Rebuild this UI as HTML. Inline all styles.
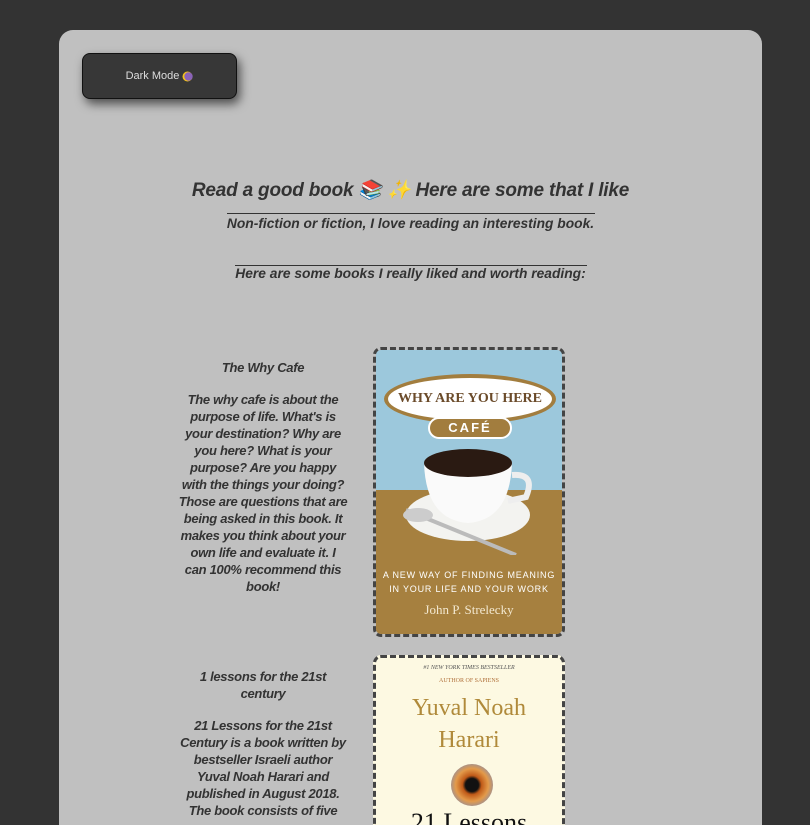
<!DOCTYPE html>
<html><head><meta charset="utf-8"><style>
*{margin:0;padding:0;box-sizing:border-box}
html,body{width:810px;height:825px;overflow:hidden;background:#333}
.wrap{position:absolute;left:59px;top:30px;width:703px;height:795px;background:#c0c0c0;border-radius:14px 14px 0 0;overflow:hidden}
.btn{position:absolute;left:23px;top:23px;width:155px;height:46px;background:#373737;border:1px solid #111;border-radius:8px;box-shadow:3px 5px 10px rgba(0,0,0,.6);color:#ddd;font:11px "Liberation Sans",sans-serif;display:flex;align-items:center;justify-content:center}
.t{position:absolute;left:0;width:703px;text-align:center;font-family:"Liberation Sans",sans-serif;font-style:italic;font-weight:bold;color:#333;white-space:nowrap}
.hr{position:absolute;height:1px;background:#333}
.desc{position:absolute;left:99px;width:210px;text-align:center;font:italic bold 13px/17px "Liberation Sans",sans-serif;color:#333;white-space:nowrap;letter-spacing:-.3px}
.img{position:absolute;left:314px;width:192px;border:3px dashed #444;border-radius:8px;overflow:hidden}
</style></head><body>
<div class="wrap">
<div class="btn">Dark Mode&nbsp;<svg width="11" height="11" viewBox="0 0 11 11"><circle cx="5.5" cy="5.5" r="5" fill="#f2c21b"/><circle cx="6.5" cy="5.5" r="4.2" fill="#8a63b8"/></svg></div>
<div class="t" style="top:148px;font-size:19px;letter-spacing:-.2px">Read a good book 📚 ✨ Here are some that I like</div>
<div class="hr" style="left:168px;width:368px;top:183px"></div>
<div class="t" style="top:186px;font-size:13.8px">Non-fiction or fiction, I love reading an interesting book.</div>
<div class="hr" style="left:176px;width:352px;top:235px"></div>
<div class="t" style="top:236px;font-size:13.8px">Here are some books I really liked and worth reading:</div>

<div class="desc" style="top:329px">The Why Cafe</div>
<div class="desc" style="top:361px">The why cafe is about the<br>purpose of life. What's is<br>your destination? Why are<br>you here? What is your<br>purpose? Are you happy<br>with the things your doing?<br>Those are questions that are<br>being asked in this book. It<br>makes you think about your<br>own life and evaluate it. I<br>can 100% recommend this<br>book!</div>
<div class="img" style="top:317px;height:290px">
 <div style="position:absolute;left:0;top:0;width:100%;height:140px;background:#9cc8dc"></div>
 <div style="position:absolute;left:0;top:140px;width:100%;height:150px;background:#a6803f"></div>
 <div style="position:absolute;left:8px;top:24px;width:172px;height:50px;border-radius:50%;background:#fff;border:4px solid #a27d3e;text-align:center;font:bold 14px/42px 'Liberation Serif',serif;color:#6b4b2a;white-space:nowrap">WHY ARE YOU HERE</div>
 <div style="position:absolute;left:52px;top:67px;width:84px;height:22px;border-radius:11px;background:#a27d3e;border:2px solid #fff;color:#fff;text-align:center;font:bold 13px/18px 'Liberation Sans',sans-serif;letter-spacing:2px">CAFÉ</div>
 <svg style="position:absolute;left:20px;top:95px" width="150" height="110"><ellipse cx="72" cy="70" rx="62" ry="26" fill="#f3f3f0"/><path d="M28 18 Q30 75 72 78 Q114 75 116 18 Z" fill="#fafafa"/><ellipse cx="72" cy="18" rx="44" ry="14" fill="#2a1a12"/><path d="M116 30 Q140 28 130 52 L112 56" fill="none" stroke="#eee" stroke-width="6"/><path d="M10 65 L120 110" stroke="#bbb" stroke-width="4"/><ellipse cx="22" cy="70" rx="15" ry="7" fill="#ccc"/></svg>
 <div style="position:absolute;left:0;top:218px;width:100%;text-align:center;font:9px/14px 'Liberation Sans',sans-serif;color:#fff;letter-spacing:.8px">A NEW WAY OF FINDING MEANING<br>IN YOUR LIFE AND YOUR WORK</div>
 <div style="position:absolute;left:0;top:252px;width:100%;text-align:center;font:13px 'Liberation Serif',serif;color:#f3e8d0">John P. Strelecky</div>
</div>

<div class="desc" style="top:638px">1 lessons for the 21st<br>century</div>
<div class="desc" style="top:687px">21 Lessons for the 21st<br>Century is a book written by<br>bestseller Israeli author<br>Yuval Noah Harari and<br>published in August 2018.<br>The book consists of five</div>
<div class="img" style="top:625px;height:170px;border-bottom:none;border-radius:8px 8px 0 0;background:#fdf9e2">
 <div style="position:absolute;left:0;top:7px;width:100%;text-align:center;font:italic 6px 'Liberation Serif',serif;color:#555">#1 NEW YORK TIMES BESTSELLER</div>
 <div style="position:absolute;left:0;top:20px;width:100%;text-align:center;font:6px 'Liberation Serif',serif;color:#b0703a">AUTHOR OF SAPIENS</div>
 <div style="position:absolute;left:0;top:34px;width:100%;text-align:center;font:24px/32px 'Liberation Serif',serif;color:#b08a3a">Yuval Noah<br>Harari</div>
 <div style="position:absolute;left:75px;top:106px;width:42px;height:42px;border-radius:50%;background:radial-gradient(circle,#111 0 22%,#c05a18 32%,#e39a4a 55%,#8a8ea8 80%)"></div>
 <div style="position:absolute;left:0;top:150px;width:100%;text-align:center;font:26px/30px 'Liberation Serif',serif;color:#111;white-space:nowrap">21 Lessons</div>
</div>
</div>
</body></html>
